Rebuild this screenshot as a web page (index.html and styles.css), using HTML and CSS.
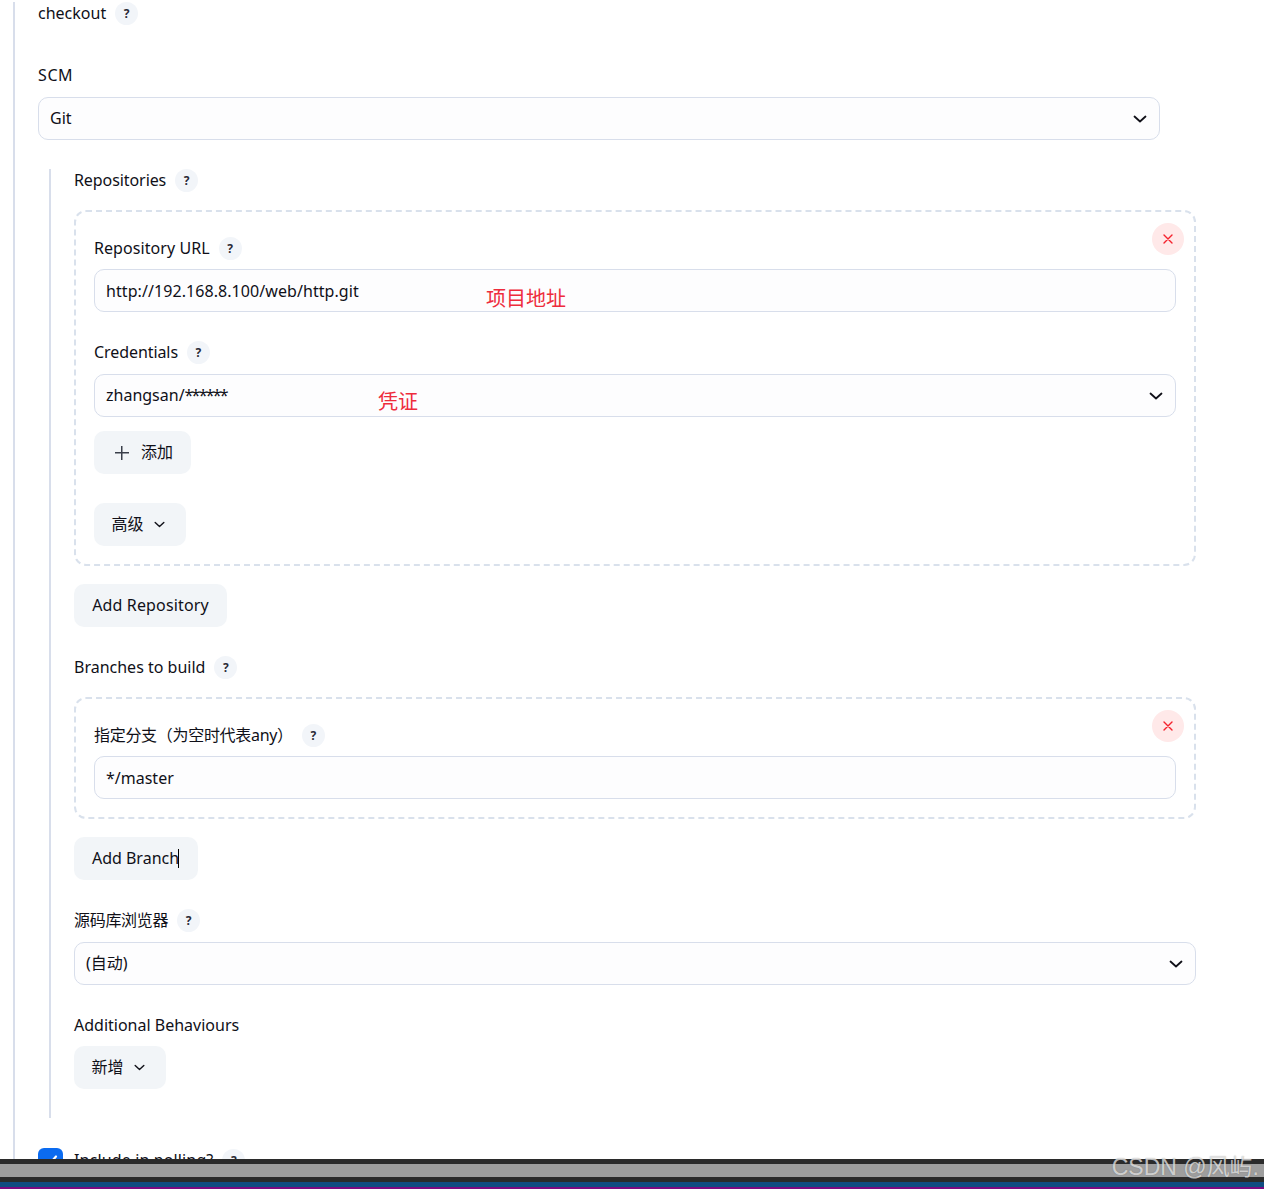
FILE: index.html
```html
<!DOCTYPE html>
<html lang="zh-CN">
<head>
<meta charset="utf-8">
<title>checkout</title>
<link rel="stylesheet" href="styles.css">
</head>
<body>
<svg class="sprite" width="0" height="0">
  <symbol id="chev" viewBox="0 0 14 8"><path d="M1.5 1.5 7 6.5l5.5-5" fill="none" stroke="currentColor" stroke-width="1.8" stroke-linecap="round" stroke-linejoin="round"/></symbol>
  <symbol id="x" viewBox="0 0 10 10"><path d="M1 1l8 8M9 1l-8 8" fill="none" stroke="currentColor" stroke-width="1.4" stroke-linecap="round"/></symbol>
</svg>
<main class="outer">
  <div class="label-row r-checkout"><span>checkout</span><span class="help">?</span></div>
  <div class="label-row r-scm"><span class="caps">SCM</span></div>
  <div class="field select s-scm"><span>Git</span><svg class="chev"><use href="#chev"/></svg></div>

  <section class="inner">
    <div class="label-row r-repos"><span class="snug">Repositories</span><span class="help">?</span></div>
    <div class="dashed d-repo">
      <button class="close"><svg class="x"><use href="#x"/></svg></button>
      <div class="label-row"><span class="wide">Repository URL</span><span class="help">?</span></div>
      <div class="field f-url"><span class="wide low">http://192.168.8.100/web/http.git</span><span class="note note-url">项目地址</span></div>
      <div class="label-row r-cred"><span class="snug">Credentials</span><span class="help">?</span></div>
      <div class="field select f-cred"><span>zhangsan/<span class="stars">******</span></span><span class="note note-cred">凭证</span><svg class="chev"><use href="#chev"/></svg></div>
      <button class="btn b-add"><span class="plus"></span><span>添加</span></button>
      <button class="btn b-adv"><span>高级</span><svg class="chev-s"><use href="#chev"/></svg></button>
    </div>
    <button class="btn b-addrepo"><span class="wider">Add Repository</span></button>
    <div class="label-row r-branches"><span>Branches to build</span><span class="help">?</span></div>
    <div class="dashed d-branch">
      <button class="close"><svg class="x"><use href="#x"/></svg></button>
      <div class="label-row"><span class="tight">指定分支（为空时代表any）</span><span class="help">?</span></div>
      <div class="field f-url"><span class="low">*/master</span></div>
    </div>
    <button class="btn b-addbranch">Add Branch<span class="caret"></span></button>
    <div class="label-row r-browser"><span class="tight">源码库浏览器</span><span class="help">?</span></div>
    <div class="field select f-browser"><span>(自动)</span><svg class="chev"><use href="#chev"/></svg></div>
    <div class="label-row r-behav"><span>Additional Behaviours</span></div>
    <button class="btn b-new"><span>新增</span><svg class="chev-s"><use href="#chev"/></svg></button>
  </section>

  <div class="check-row">
    <span class="checkbox"><svg viewBox="0 0 25 25" width="25" height="25"><path d="M7.5 13l3.500 3.500 7-8" fill="none" stroke="#fff" stroke-width="2.200" stroke-linecap="round" stroke-linejoin="round"/></svg></span>
    <span class="wider">Include in polling?</span><span class="help">?</span>
  </div>
</main>
<footer class="taskbar">
  <div class="tb-dark"></div>
  <div class="tb-gray"></div>
  <div class="tb-dark"></div>
  <div class="tb-blue"></div>
  <div class="tb-purple"></div>
  <span class="watermark">CSDN @风屿.</span>
</footer>
</body>
</html>
```
FILE: styles.css
```css
* { box-sizing: border-box; }
html, body { margin: 0; padding: 0; }
body {
  height: 1189px;
  overflow: hidden;
  position: relative;
  background: #fff;
  color: #101018;
  font-family: "Noto Sans", "Noto Sans CJK SC", sans-serif;
  font-size: 16px;
  line-height: 23px;
}
.sprite { position: absolute; }
.wide { letter-spacing: .07px; }
.wider { letter-spacing: .14px; }
.snug { letter-spacing: -.08px; }
.caps { letter-spacing: .6px; }
.tight { letter-spacing: -.3px; }
.stars { letter-spacing: -1.8px; }
.low { padding-top: 2px; }
.outer {
  margin: 2px 0 0 13px;
  padding-left: 23px;
  width: 1147px;
  height: 1187px;
  border-left: 2px solid #d8deeb;
}
.label-row { display: flex; align-items: center; gap: 9px; height: 23px; }
.help {
  width: 23px; height: 23px; border-radius: 50%;
  background: #f2f5f9;
  display: flex; align-items: center; justify-content: center;
  font-size: 12px; font-weight: 700; color: #2a2a36;
}
.r-scm { margin-top: 39px; margin-bottom: 10px; }
.field {
  height: 43px;
  border: 1px solid #d8deeb;
  border-radius: 10px;
  background: #fdfdfe;
  padding: 0 11px;
  display: flex; align-items: center;
  position: relative;
}
.select { justify-content: space-between; padding-right: 12px; }
.chev { width: 14px; height: 8px; color: #101018; }
.chev-s { width: 11px; height: 7px; color: #101018; }
.inner {
  margin: 29px -36px 0 11px;
  padding-left: 23px;
  border-left: 2px solid #d8deeb;
  height: 949px;
}
.dashed {
  position: relative;
  border: 2px dashed #d9e1ec;
  border-radius: 12px;
  padding: 25px 18px 18px;
}
.d-repo { height: 356px; margin-top: 18px; }
.close {
  position: absolute; top: 11px; right: 10px;
  width: 32px; height: 32px; padding: 0;
  border: 0; border-radius: 50%;
  background: #ffe9e9; color: #f5222d;
  display: flex; align-items: center; justify-content: center;
}
.x { width: 10px; height: 10px; }
.f-url { margin-top: 9px; }
.r-cred { margin-top: 29px; }
.f-cred { margin-top: 10px; }
.note {
  position: absolute;
  font-size: 20px; line-height: 24px;
  color: #ee2c3c;
}
.note-url { left: 391px; top: 17px; }
.note-cred { left: 283px; top: 15px; }
.btn {
  display: flex; align-items: center; justify-content: center;
  height: 43px; padding: 0;
  border: 0; border-radius: 10px;
  background: #f2f5f8;
  color: #101018;
  font: inherit;
  position: relative;
}
.b-add { margin-top: 14px; width: 97px; gap: 12px; padding-left: 3px; }
.plus { width: 14px; height: 14px; background:
  linear-gradient(#3a3f4a, #3a3f4a) center / 14px 1.500px no-repeat,
  linear-gradient(#3a3f4a, #3a3f4a) center / 1.500px 14px no-repeat; }
.b-adv { margin-top: 29px; width: 92px; gap: 10px; padding-right: 4px; }
.b-addrepo { margin-top: 18px; width: 153px; }
.r-branches { margin-top: 29px; }
.d-branch { height: 122px; margin-top: 18px; }
.b-addbranch { margin-top: 18px; width: 124px; padding-right: 1px; }
.caret {
  position: absolute; left: 104px; top: 12px;
  width: 1px; height: 19px; background: #000;
}
.r-browser { margin-top: 29px; }
.f-browser { margin-top: 10px; }
.r-behav { margin-top: 29px; }
.b-new { margin-top: 9px; width: 92px; gap: 10px; padding-right: 4px; }
.check-row {
  display: flex; align-items: center; height: 23px;
  margin-top: 31px;
  gap: 9px;
}
.checkbox {
  width: 25px; height: 25px; border-radius: 6px;
  background: #0b6bf0; flex: none; margin-right: 2px;
}
.taskbar {
  position: absolute; left: 0; right: 0; bottom: 0; height: 30px;
  display: flex; flex-direction: column;
}
.tb-dark { height: 5px; background: #2b2b2b; }
.tb-gray { height: 13px; background: #9e9e9e; }
.tb-blue { height: 5px; background: #0f4c81; }
.tb-purple { height: 2px; background: #7a0a80; }
.watermark {
  position: absolute; right: 5px; top: -6px;
  font-family: "Liberation Sans", "Noto Sans CJK SC", sans-serif;
  font-size: 23px; line-height: 28px;
  color: rgba(255,255,255,.68);
  text-shadow: 0 0 1px rgba(60,60,60,.5);
}
```
